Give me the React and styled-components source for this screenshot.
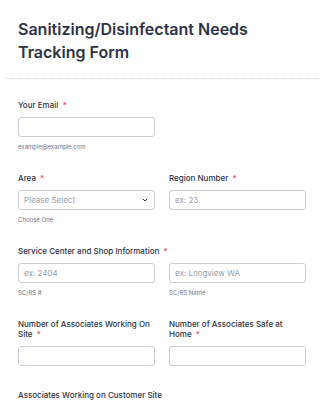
import React from "react";
import styled, { createGlobalStyle } from "styled-components";

const Global = createGlobalStyle`
  html, body {
    margin: 0;
    padding: 0;
    background: #fff;
  }
  body {
    font-family: Inter, "Noto Sans", sans-serif;
    color: #2c3345;
  }
`;

export default function App() {
  return (
    <Page>
      <Global />
      <Header>
        <Title>Sanitizing/Disinfectant Needs Tracking Form</Title>
      </Header>
      <Divider />
      <Form>
        <Field>
          <Label>
            Your Email <Star>*</Star>
          </Label>
          <Input type="email" />
          <Hint>example@example.com</Hint>
        </Field>

        <Row>
          <Field>
            <Label>
              Area <Star>*</Star>
            </Label>
            <SelectBox>
              <span>Please Select</span>
              <svg width="6" height="4" viewBox="0 0 6 4">
                <path d="M0.8 0.8 L3 3 L5.2 0.8" fill="none" stroke="#2c3345" strokeWidth="1" />
              </svg>
            </SelectBox>
            <Hint>Choose One</Hint>
          </Field>
          <Field>
            <Label>
              Region Number <Star>*</Star>
            </Label>
            <Input placeholder="ex: 23" />
          </Field>
        </Row>

        <Field>
          <Label>
            Service Center and Shop Information <Star>*</Star>
          </Label>
          <Row>
            <div>
              <Input placeholder="ex: 2404" />
              <Hint>SC/RS #</Hint>
            </div>
            <div>
              <Input placeholder="ex: Longview WA" />
              <Hint>SC/RS Name</Hint>
            </div>
          </Row>
        </Field>

        <Row>
          <Field>
            <Label>
              Number of Associates Working On Site <Star>*</Star>
            </Label>
            <Input />
          </Field>
          <Field>
            <Label>
              Number of Associates Safe at Home <Star>*</Star>
            </Label>
            <Input />
          </Field>
        </Row>

        <Field $extraTop={2}>
          <Label>Associates Working on Customer Site</Label>
        </Field>
      </Form>
    </Page>
  );
}

const Page = styled.div`
  width: 325px;
  height: 400px;
  overflow: hidden;
  background: #fff;
`;

const Header = styled.div`
  padding: 18px 18px 14px;
`;

const Title = styled.h1`
  margin: 0;
  font-size: 16px;
  line-height: 23px;
  font-weight: 600;
  color: #2c3345;
  width: 260px;
`;

const Divider = styled.div`
  margin: 0 5px;
  border-top: 1px dotted #d3d6dd;
`;

const Form = styled.div`
  display: flex;
  flex-direction: column;
  gap: 22px;
  padding: 21px 18px 0;
`;

const Row = styled.div`
  display: grid;
  grid-template-columns: 137px 137px;
  column-gap: 14px;
  align-items: start;
`;

const Field = styled.div`
  display: flex;
  flex-direction: column;
  align-items: flex-start;
  margin-top: ${(p) => p.$extraTop || 0}px;
`;

const Label = styled.label`
  display: block;
  font-size: 8px;
  line-height: 10px;
  font-weight: 500;
  color: #2c3345;
  margin-bottom: 7px;
`;

const Star = styled.span`
  color: #f23a3c;
  margin-left: 2px;
`;

const Input = styled.input`
  display: block;
  box-sizing: border-box;
  width: 137px;
  height: 20px;
  margin: 0;
  padding: 0 5px;
  border: 1px solid #c9ced9;
  border-radius: 3px;
  background: #fff;
  font-family: Inter, sans-serif;
  font-size: 8px;
  color: #2c3345;
  outline: none;
  &::placeholder {
    color: #979eab;
  }
`;

const SelectBox = styled.div`
  box-sizing: border-box;
  width: 137px;
  height: 20px;
  padding: 0 6px 0 5px;
  border: 1px solid #c9ced9;
  border-radius: 3px;
  display: flex;
  align-items: center;
  justify-content: space-between;
  font-size: 8px;
  color: #979eab;
`;

const Hint = styled.div`
  margin-top: 6px;
  font-size: 6px;
  line-height: 8px;
  color: #6f7687;
`;
